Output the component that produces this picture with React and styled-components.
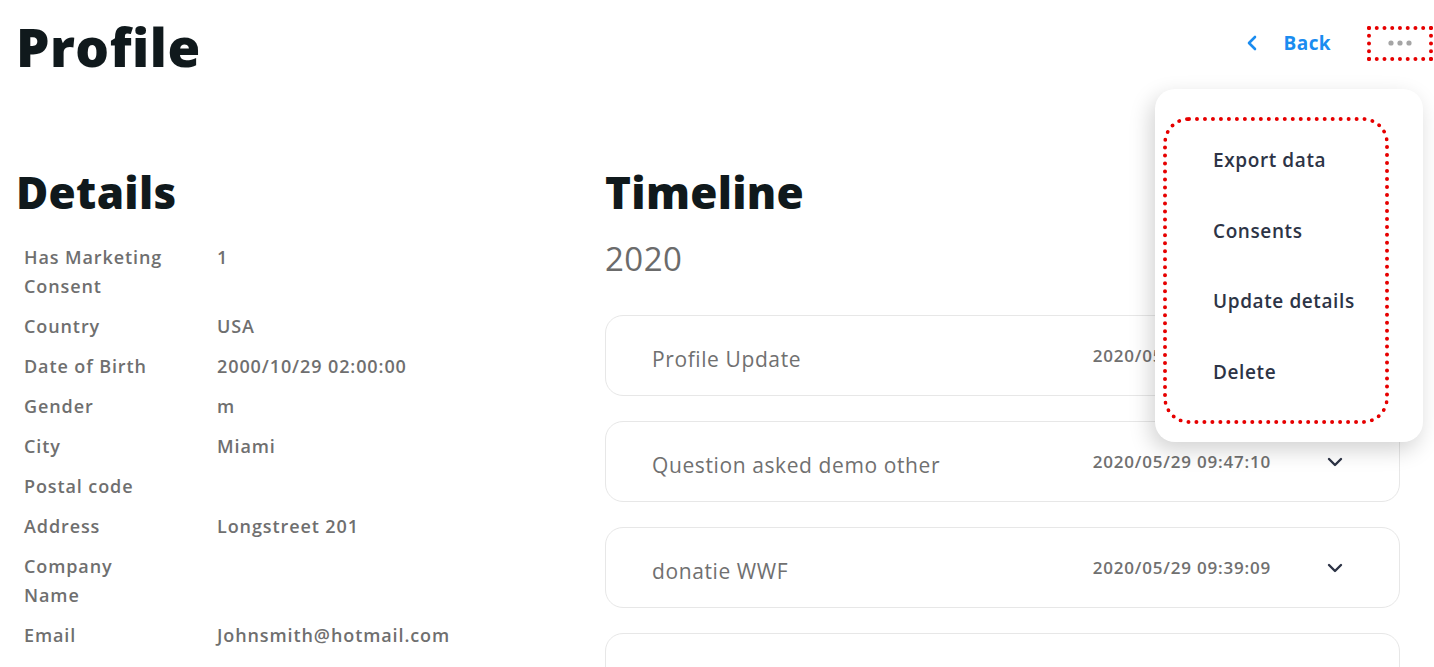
import React from "react";
import styled, { createGlobalStyle } from "styled-components";
import { ChevronLeft, ChevronDown } from "lucide-react";

const GlobalStyle = createGlobalStyle`
    body {
        margin: 0;
        background: #ffffff;
        font-family: "Open Sans", "Liberation Sans", sans-serif;
        overflow: hidden;
    }
`;

const Page = styled.div`
    padding: 0 34px 0 16px;
    height: 667px;
    box-sizing: border-box;
    overflow: hidden;
`;

const Header = styled.div`
    display: flex;
    justify-content: space-between;
    align-items: center;
    height: 92px;
    position: relative;
`;

const Title = styled.h1`
    margin: 0;
    font-size: 53px;
    font-weight: 800;
    color: #10191c;
    letter-spacing: 0.5px;
`;

const HeaderActions = styled.div`
    display: flex;
    align-items: center;
    gap: 36px;
    margin-right: -33px;
    margin-top: -6px;
`;

const BackLink = styled.a`
    display: flex;
    align-items: center;
    gap: 20px;
    color: #1a8cf0;
    font-size: 19px;
    font-weight: 700;
    letter-spacing: 0.4px;
    text-decoration: none;
`;

const MoreButton = styled.button`
    display: flex;
    align-items: center;
    justify-content: center;
    width: 66px;
    height: 35px;
    box-sizing: border-box;
    border: 4px dotted #e60000;
    background: none;
    padding: 0;
`;

const Menu = styled.div`
    position: absolute;
    top: 89px;
    right: -23px;
    width: 268px;
    height: 353px;
    box-sizing: border-box;
    padding: 28px 34px 18px 8px;
    background: #ffffff;
    border-radius: 20px;
    box-shadow: -4px 8px 22px rgba(0, 0, 0, 0.18);
    z-index: 5;
`;

const MenuOutline = styled.div`
    height: 100%;
    box-sizing: border-box;
    border: 4px dotted #e60000;
    border-radius: 26px;
    display: flex;
    flex-direction: column;
    justify-content: space-between;
    padding: 26px 0 35px 46px;
`;

const MenuItem = styled.div`
    font-size: 19px;
    font-weight: 600;
    letter-spacing: 0.6px;
    color: #2d3446;
`;

const Columns = styled.div`
    display: grid;
    grid-template-columns: 589px 1fr;
`;

const SectionTitle = styled.h2`
    margin: 0;
    font-size: 44px;
    font-weight: 800;
    color: #10191c;
    line-height: 1;
    padding-top: 78px;
    letter-spacing: 0.3px;
`;

const DetailList = styled.div`
    display: flex;
    flex-direction: column;
    gap: 11px;
    padding: 29px 0 0 8px;
`;

const DetailRow = styled.div`
    display: grid;
    grid-template-columns: 142px 1fr;
    column-gap: 51px;
    font-size: 18px;
    font-weight: 600;
    letter-spacing: 0.9px;
    color: #6f6f6f;
    line-height: 29px;
`;

const Year = styled.div`
    font-size: 33px;
    color: #6b6b6b;
    letter-spacing: 0.5px;
    margin: 28px 0 40px;
    line-height: 1;
`;

const CardList = styled.div`
    display: flex;
    flex-direction: column;
    gap: 25px;
`;

const Card = styled.div`
    display: flex;
    align-items: center;
    height: 81px;
    box-sizing: border-box;
    border: 1px solid #e7e7e7;
    border-radius: 18px;
    padding: 0 52px 0 46px;
`;

const CardTitle = styled.div`
    flex: 1;
    font-size: 21px;
    letter-spacing: 0.6px;
    color: #707070;
    padding-top: 6px;
`;

const CardDate = styled.div`
    font-size: 17px;
    font-weight: 600;
    letter-spacing: 0.8px;
    color: #707070;
    margin-right: 52px;
`;

const Dots = () => (
    <svg width="24" height="6" viewBox="0 0 24 6">
        <circle cx="3" cy="3" r="2.6" fill="#a5a5a5" />
        <circle cx="12" cy="3" r="2.6" fill="#a5a5a5" />
        <circle cx="21" cy="3" r="2.6" fill="#a5a5a5" />
    </svg>
);

const details = [
    ["Has Marketing Consent", "1"],
    ["Country", "USA"],
    ["Date of Birth", "2000/10/29 02:00:00"],
    ["Gender", "m"],
    ["City", "Miami"],
    ["Postal code", ""],
    ["Address", "Longstreet 201"],
    ["Company Name", ""],
    ["Email", "Johnsmith@hotmail.com"],
];

const events = [
    ["Profile Update", "2020/05/29 09:52:41"],
    ["Question asked demo other", "2020/05/29 09:47:10"],
    ["donatie WWF", "2020/05/29 09:39:09"],
    ["Newsletter signup", "2020/05/29 09:31:55"],
];

export default function App() {
    return (
        <Page>
            <GlobalStyle />
            <Header>
                <Title>Profile</Title>
                <HeaderActions>
                    <BackLink href="#">
                        <ChevronLeft size={24} strokeWidth={2.6} />
                        Back
                    </BackLink>
                    <MoreButton>
                        <Dots />
                    </MoreButton>
                </HeaderActions>
                <Menu>
                    <MenuOutline>
                        <MenuItem>Export data</MenuItem>
                        <MenuItem>Consents</MenuItem>
                        <MenuItem>Update details</MenuItem>
                        <MenuItem>Delete</MenuItem>
                    </MenuOutline>
                </Menu>
            </Header>
            <Columns>
                <div>
                    <SectionTitle>Details</SectionTitle>
                    <DetailList>
                        {details.map(([label, value]) => (
                            <DetailRow key={label}>
                                <span>{label}</span>
                                <span>{value}</span>
                            </DetailRow>
                        ))}
                    </DetailList>
                </div>
                <div>
                    <SectionTitle>Timeline</SectionTitle>
                    <Year>2020</Year>
                    <CardList>
                        {events.map(([title, date]) => (
                            <Card key={title}>
                                <CardTitle>{title}</CardTitle>
                                <CardDate>{date}</CardDate>
                                <ChevronDown
                                    size={24}
                                    strokeWidth={2.4}
                                    color="#2d3446"
                                />
                            </Card>
                        ))}
                    </CardList>
                </div>
            </Columns>
        </Page>
    );
}
